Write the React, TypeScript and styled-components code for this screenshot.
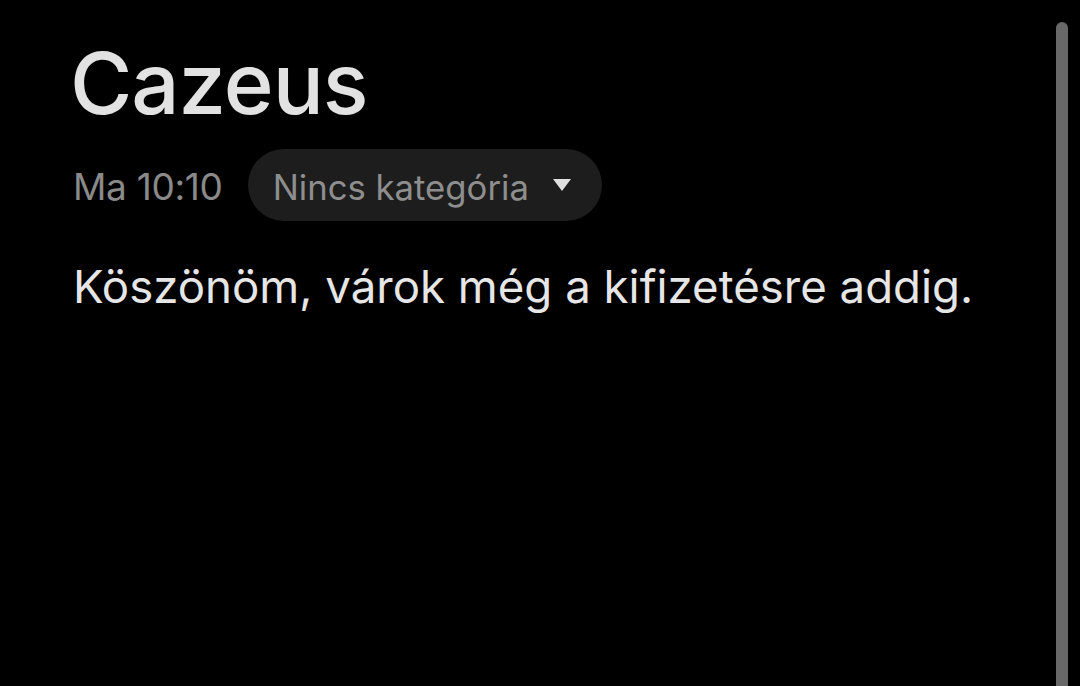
import React from 'react';
import styled, { createGlobalStyle } from 'styled-components';

const GlobalStyle = createGlobalStyle`
  html, body {
    margin: 0;
    padding: 0;
    background: #000;
    overflow: hidden;
  }
`;

const App = () => {
  return (
    <>
      <GlobalStyle />
      <Screen>
        <Note>
          <Title>Cazeus</Title>
          <MetaRow>
            <Time>Ma 10:10</Time>
            <CategoryPill>
              <span>Nincs kategória</span>
              <Caret viewBox="0 0 20 14">
                <path d="M1 1 H19 L10 13 Z" fill="#e0e0e0" />
              </Caret>
            </CategoryPill>
          </MetaRow>
          <Body>Köszönöm, várok még a kifizetésre addig.</Body>
        </Note>
        <ScrollTrack>
          <ScrollThumb />
        </ScrollTrack>
      </Screen>
    </>
  );
};

const Screen = styled.div`
  width: 1080px;
  height: 686px;
  background: #000;
  display: flex;
  overflow: hidden;
  font-family: Inter, 'Noto Sans', sans-serif;
`;

const Note = styled.div`
  flex: 1;
  padding: 32px 0 0 73px;
  display: flex;
  flex-direction: column;
  align-items: flex-start;
`;

const Title = styled.h1`
  margin: 0 0 0 -3px;
  font-size: 85px;
  font-weight: 500;
  color: #e2e2e2;
  line-height: 104px;
  letter-spacing: -1px;
`;

const MetaRow = styled.div`
  margin-top: 13px;
  display: flex;
  align-items: center;
  gap: 25px;
`;

const Time = styled.span`
  font-size: 37px;
  color: #8a8a8a;
  letter-spacing: -0.3px;
  padding-top: 3px;
`;

const CategoryPill = styled.div`
  height: 72px;
  padding: 0 30px 0 25px;
  border-radius: 36px;
  background: #1d1d1d;
  display: flex;
  align-items: center;
  gap: 23px;
  font-size: 34.7px;
  color: #8e8e8e;

  span {
    padding-top: 3px;
  }
`;

const Caret = styled.svg`
  width: 20px;
  height: 14px;
`;

const Body = styled.p`
  margin: 35px 0 0;
  font-size: 45.6px;
  color: #e6e6e6;
  line-height: 62px;
`;

const ScrollTrack = styled.div`
  width: 24px;
  padding-top: 22px;
  display: flex;
  align-items: stretch;
`;

const ScrollThumb = styled.div`
  width: 12px;
  border-radius: 6px 6px 0 0;
  background: #686868;
`;

export default App;
